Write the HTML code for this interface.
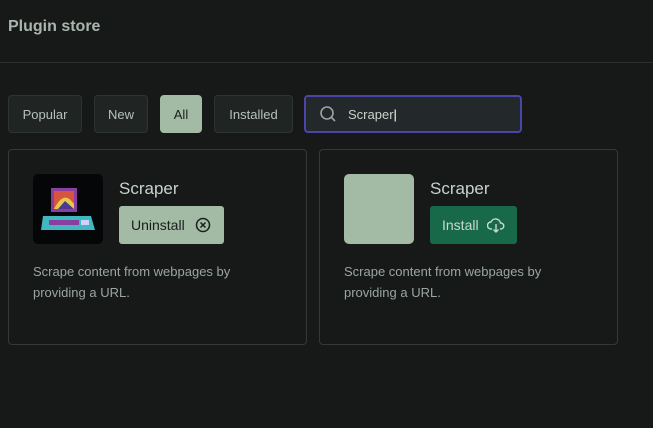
<!DOCTYPE html>
<html><head><style>
*{box-sizing:border-box;margin:0;padding:0}
body{width:653px;height:428px;background:#161918;font-family:"Liberation Sans",sans-serif;position:relative;overflow:hidden;color:#c9d3cc}
.t{position:absolute;left:8px;top:18px;font-size:16px;font-weight:bold;color:#a9b5ad}
.hr{position:absolute;left:0;right:0;top:62px;height:1px;background:#2a2f2d}
.b{position:absolute;top:95px;height:38px;border:1px solid #2e3432;border-radius:4px;background:#202524;font-size:13px;color:#b6c0ba;display:flex;align-items:center;justify-content:center}
.card{position:absolute;top:149px;width:299px;height:196px;border:1px solid #33393a;border-radius:4px}
.ic{position:absolute;left:24px;top:24px;width:70px;height:70px;border-radius:5px}
.nm{position:absolute;left:110px;top:29px;font-size:17px;color:#c9d3cc}
.btn{position:absolute;left:110px;top:56px;height:38px;border-radius:3px;font-size:14px;display:flex;align-items:center;padding:0 12px}
.d{position:absolute;left:24px;top:111px;font-size:13px;line-height:21px;color:#9aa69f}
</style></head><body>
<div class="t">Plugin store</div>
<div class="hr"></div>
<div class="b" style="left:8px;width:74px">Popular</div>
<div class="b" style="left:94px;width:54px">New</div>
<div class="b" style="left:160px;width:42px;background:#a3bba4;border-color:#a3bba4;color:#1a1f1c">All</div>
<div class="b" style="left:214px;width:79px">Installed</div>
<div class="b" style="left:304px;width:218px;border:2px solid #4a45a8;justify-content:flex-start;padding-left:12px;background:#23282a">
<svg width="20" height="20" viewBox="0 0 20 20" fill="none" stroke="#9aa69f" stroke-width="1.6"><circle cx="9" cy="9" r="6"/><path d="M13.5 13.5L17 17"/></svg>
<span style="margin-left:10px;color:#c9d3cc">Scraper<span style="color:#fff">|</span></span></div>

<div class="card" style="left:8px">
<div class="ic" style="background:#050608">
<svg width="70" height="70" viewBox="0 0 70 70"><rect x="18" y="14" width="26" height="24" fill="#8a3fa0"/><rect x="21" y="17" width="20" height="18" fill="#d7543f"/><path d="M21 35 Q31 15 41 30 L41 35Z" fill="#e4c94a"/><path d="M25 35 L32 27 L41 35Z" fill="#4a3a90"/><path d="M10 42 L58 42 L62 56 L8 56Z" fill="#3fb8c0"/><rect x="16" y="46" width="30" height="5" fill="#8a3fa0"/><rect x="48" y="46" width="8" height="5" fill="#d0d0ff"/></svg>
</div>
<div class="nm">Scraper</div>
<div class="btn" style="background:#a3bba4;color:#1a1f1c;width:105px">Uninstall
<svg style="margin-left:10px" width="16" height="16" viewBox="0 0 16 16" fill="none" stroke="#1a1f1c" stroke-width="1.5"><circle cx="8" cy="8" r="6.5"/><path d="M5.5 5.5L10.5 10.5M10.5 5.5L5.5 10.5"/></svg></div>
<div class="d">Scrape content from webpages by<br>providing a URL.</div>
</div>

<div class="card" style="left:319px">
<div class="ic" style="background:#a3bba4"></div>
<div class="nm">Scraper</div>
<div class="btn" style="background:#17694a;color:#c9d9cf;width:87px">Install
<svg style="margin-left:8px" width="18" height="16" viewBox="0 0 18 16" fill="none" stroke="#c9d9cf" stroke-width="1.4"><path d="M5 12H4a3.5 3.5 0 0 1 0-7 5 5 0 0 1 9.5 1A3 3 0 0 1 14 12h-1"/><path d="M9 7v8M6.5 12.5L9 15l2.5-2.5"/></svg></div>
<div class="d">Scrape content from webpages by<br>providing a URL.</div>
</div>
</body></html>
